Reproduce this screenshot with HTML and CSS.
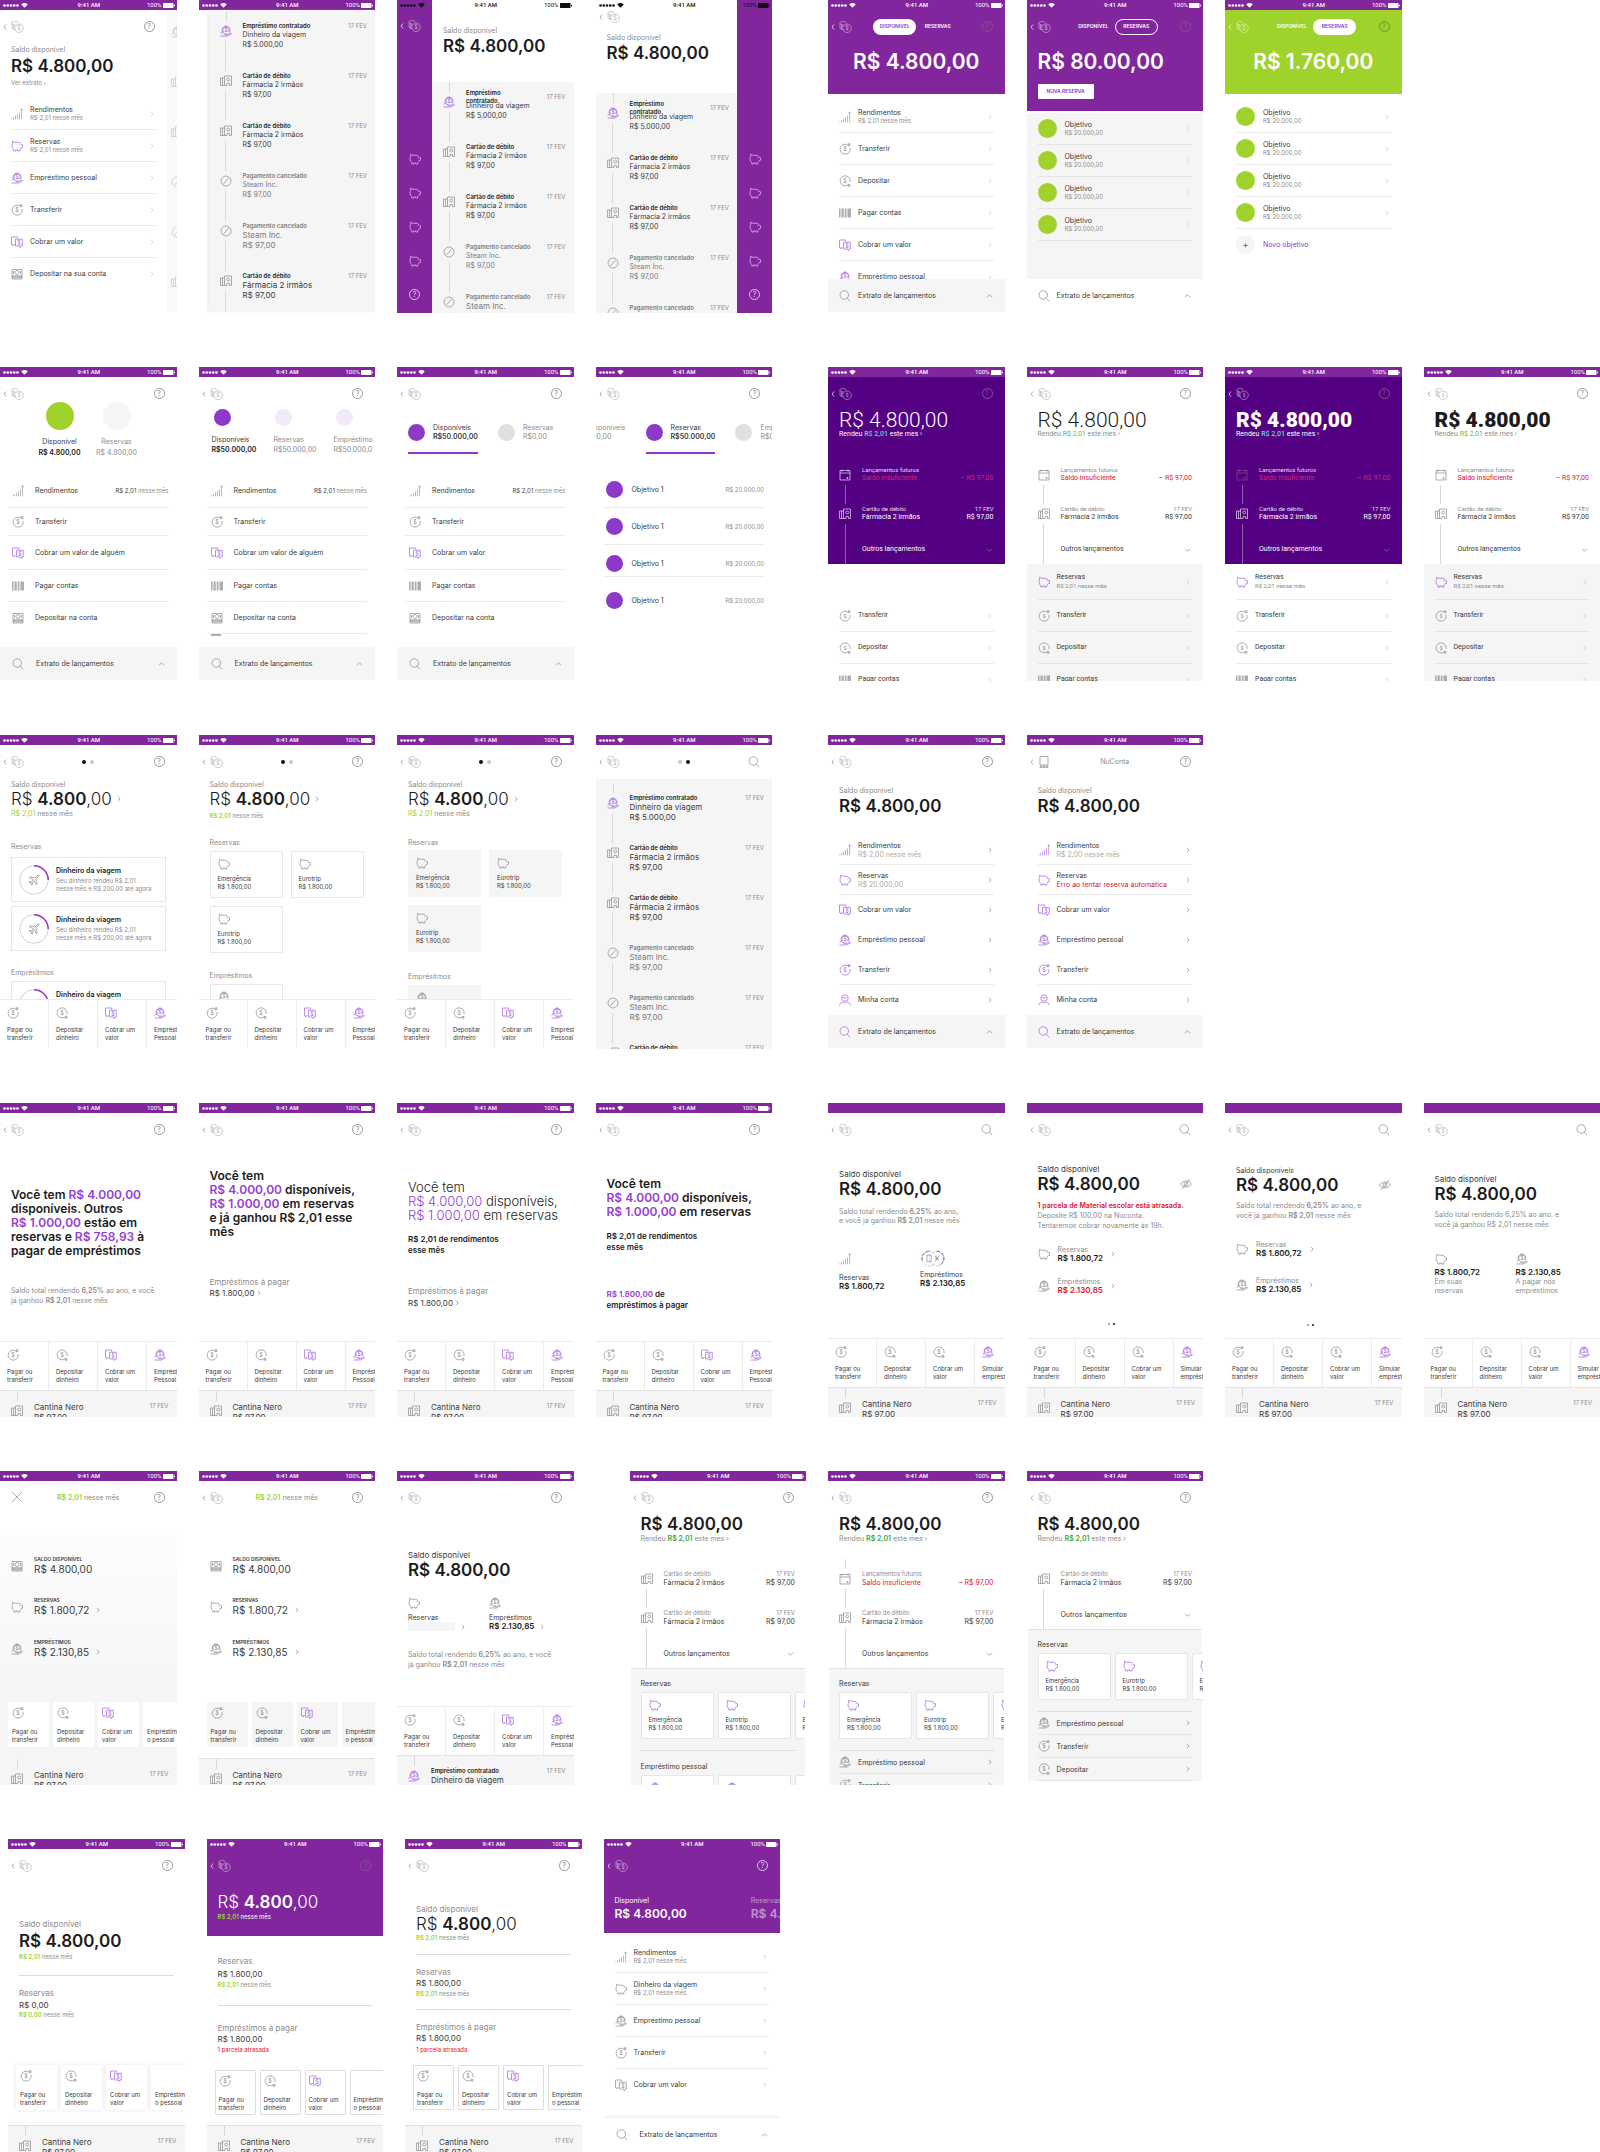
FILE: index.html
```html
<!DOCTYPE html>
<html lang="pt-BR">
<head>
<meta charset="utf-8">
<title>NuConta – estudos da tela inicial</title>
<link rel="stylesheet" href="styles.css">
</head>
<body>
<svg class="defs" aria-hidden="true">
<symbol id="sig" viewBox="0 0 50 10"><g fill="currentColor" stroke="none"><circle cx="3" cy="5" r="2.6"/><circle cx="9.500" cy="5" r="2.600"/><circle cx="16" cy="5" r="2.600"/><circle cx="22.500" cy="5" r="2.600"/><circle cx="29" cy="5" r="2.600"/><path d="M43 9.500 36.500 3a9 9 0 0 1 13 0z"/></g></symbol>
<symbol id="bat" viewBox="0 0 24 10"><rect x="0" y="0" width="21" height="10" rx="1" fill="currentColor" stroke="none"/><rect x="22" y="3.500" width="2" height="3" fill="currentColor" stroke="none"/></symbol>
<symbol id="back" viewBox="0 0 42 24"><path d="M6 7 2 12l4 5"/><g opacity=".6"><path d="M25 17c-4 0-7-1-7-3V4c0-2 2-3 5-3 4 0 7 1 7 3M18 5c1 2 4 2 6 2M21 7v9M23.500 8v3"/><circle cx="32" cy="14.500" r="8.500"/><text x="32" y="18.500" class="coin">$</text></g></symbol>
<symbol id="search" viewBox="0 0 24 24"><circle cx="10.500" cy="10" r="8.500"/><path d="m16.500 16.500 6 6"/></symbol>
<symbol id="chart" viewBox="0 0 24 24"><path stroke-width="1.2" d="M1.500 22.500v-2M5 22.500v-4M9 22.500v-7M13 22.500v-10M17 22.500V9M21.200 22.500V2M19.500 4.500 21.200 1.500 23 4.500"/></symbol>
<symbol id="pig" viewBox="0 0 24 24"><path d="M3 2.500 7.500 4.500H16c2 1 3.500 2.500 4.500 4.500l2.500.5v5l-3 1c-.5 1.500-1.500 2.500-2.500 3.500V22h-4v-2H9.500v2h-4v-3C1.500 16 1 10 3.500 6.500z"/><path d="M17.500 9v1.500"/></symbol>
<symbol id="loan" viewBox="0 0 24 24"><path d="M4.500 15c-1-8 2-13 7.500-13s8.500 5 7.500 13"/><path d="M7 14a6.500 6.500 0 1 1 10 0M1 16.500l4-1.500 6 3h4.500M1 22h14l8-4.500c-1-1.500-3-1.500-4-.5l-4 2.500H9"/><text x="12" y="13" class="coin">$</text></symbol>
<symbol id="send" viewBox="0 0 24 24"><path d="M18.500 4.500A10 10 0 1 0 22 10M18.500 1.500h3.500V5l-3 .5z"/><text x="12" y="16" class="coin">$</text></symbol>
<symbol id="put" viewBox="0 0 24 24"><path d="M18.500 19.500A10 10 0 1 1 22 14M18.500 22.500h3.500V19l-3-.5z"/><text x="12" y="16" class="coin">$</text></symbol>
<symbol id="charge" viewBox="0 0 24 24"><path d="M7 17H5.500L4 20l-1.500-3H1V2h12.500v3"/><path d="M9 6.500h13.500V20H20l-1.500 3-1.500-3H9z"/><text x="15.800" y="17" class="coin">$</text></symbol>
<symbol id="cash" viewBox="0 0 24 24"><path d="M2 3h20v19H2z"/><circle cx="12" cy="9" r="4"/><path d="M5 6v6M19 6v6M2 15.500h20M2 17.500h20M2 19.500h20"/></symbol>
<symbol id="code" viewBox="0 0 24 24"><path d="M1 3v18M4 3v18M7 3v18M9.500 3v18M13 3v18M16 3v18M19 3v18M21 3v18M23 3v18"/></symbol>
<symbol id="shop" viewBox="0 0 24 24"><path d="M9 21H1V6h8M5 6v15M9 21V2h14v19h-4v-4h-5v4z"/><circle cx="16.500" cy="9" r="3"/></symbol>
<symbol id="ban" viewBox="0 0 24 24"><circle cx="12" cy="12" r="10"/><path d="m6.500 18.500 11-13"/></symbol>
<symbol id="cal" viewBox="0 0 24 24"><path d="M2 3h20v19H2zM2 8h20M6 1v4.500M18 1v4.500M15 18h4M17 16v4"/></symbol>
<symbol id="right" viewBox="0 0 8 12"><path d="m2 1.500 4 4.500-4 4.500"/></symbol>
<symbol id="up" viewBox="0 0 14 8"><path d="m2 6.500 5-5 5 5"/></symbol>
<symbol id="down" viewBox="0 0 14 8"><path d="m2 1.500 5 5 5-5"/></symbol>
<symbol id="plane" viewBox="0 0 24 24"><path d="M20 2c1.500-.5 2.500.5 2 2l-6 6 2.500 10-2 1.500-4-8-4 4 .5 3.500L7.500 22 6 18l-4-1.500L3.500 15l3.500.5 4-4-8-4L4.500 5.500 14 8z"/></symbol>
<symbol id="ring" viewBox="0 0 60 60"><circle cx="30" cy="30" r="28.500" stroke="#bbb"/><path d="M30 1.500A28.500 28.500 0 0 1 58.500 30" stroke="#8c38c8" stroke-width="3"/><svg x="18" y="18" width="24" height="24"><use href="#plane"/></svg></symbol>
<symbol id="rings" viewBox="0 0 54 36"><g stroke-dasharray="7 3"><circle cx="19" cy="18" r="15.500" stroke="#bbb"/><circle cx="35" cy="18" r="15.500" stroke="#bbb"/><path d="M4 22A15.500 15.500 0 0 1 22 3M35 2.500A15.500 15.500 0 0 1 40 32.500" stroke="#8c38c8" stroke-width="2"/></g><path d="M14 11h9v14h-9zM31 12l9 12M40 12l-9 12M32 18h7"/></symbol>
<symbol id="hide" viewBox="0 0 24 24"><path d="M1 12c5-8 17-8 22 0-5 8-17 8-22 0z"/><circle cx="12" cy="12" r="4"/><path d="M4 22 20 2"/></symbol>
<symbol id="user" viewBox="0 0 24 24"><circle cx="12" cy="8" r="6.500"/><path d="M8 6.500c3 2 6 2 9 0M1 22.500c0-4 4-5 8-6.500 2 2 4 2 6 0 4 1.500 8 2.500 8 6.500"/></symbol>
<symbol id="close" viewBox="0 0 24 24"><path d="m2 2 20 20M22 2 2 22"/></symbol>
<symbol id="heart" viewBox="0 0 24 24"><path d="M12 21C5 16 2 12 2 8c0-5 8-6 10-1 2-5 10-4 10 1 0 4-3 8-10 13z"/></symbol>
<symbol id="card" viewBox="0 0 42 24"><path d="M6 7 2 12l4 5M20 1h16v17H20zM20 20h4v3h-4zM26 20h4v3h-4zM32 20h4v3h-4z"/></symbol>
</svg>

<main class="sheet">

<!-- 1: lista, extrato lateral e abas -->
<section class="strip first">
<article class="phone">
<header class="bar"><svg><use href="#sig"/></svg><b>9:41 AM</b><span>100%<svg><use href="#bat"/></svg></span></header>
<div class="split">
<div class="pane">
<nav class="nav"><a href="#" class="back" aria-label="Voltar"><svg><use href="#back"/></svg></a><i></i><button class="help" aria-label="Ajuda">?</button></nav>
<div class="pad"><p class="muted m2">Saldo disponível</p><h2 class="amt m2">R$ 4.800,00</h2><p class="sm muted m3">Ver extrato ›</p></div>
<div class="list m11">
<a href="#" class="row"><svg class="i"><use href="#chart"/></svg><span>Rendimentos<small>R$ 2,01 nesse mês</small></span><svg class="ch"><use href="#right"/></svg></a>
<a href="#" class="row"><svg class="i pu"><use href="#pig"/></svg><span>Reservas<small>R$ 2,01 nesse mês</small></span><svg class="ch"><use href="#right"/></svg></a>
<a href="#" class="row"><svg class="i pu"><use href="#loan"/></svg><span>Empréstimo pessoal</span><svg class="ch"><use href="#right"/></svg></a>
<a href="#" class="row"><svg class="i"><use href="#send"/></svg><span>Transferir</span><svg class="ch"><use href="#right"/></svg></a>
<a href="#" class="row"><svg class="i pu"><use href="#charge"/></svg><span>Cobrar um valor</span><svg class="ch"><use href="#right"/></svg></a>
<a href="#" class="row"><svg class="i"><use href="#cash"/></svg><span>Depositar na sua conta</span><svg class="ch"><use href="#right"/></svg></a>
</div>
</div>
<aside class="peek"><svg class="i pu"><use href="#loan"/></svg><svg class="i"><use href="#shop"/></svg><svg class="i"><use href="#shop"/></svg><svg class="i"><use href="#ban"/></svg><svg class="i"><use href="#ban"/></svg><svg class="i"><use href="#shop"/></svg></aside>
</div>
</article>

<article class="phone">
<header class="bar"><svg><use href="#sig"/></svg><b>9:41 AM</b><span>100%<svg><use href="#bat"/></svg></span></header>
<div class="panel grow slid m1">
<div class="lead"></div>
<div class="tx"><div class="rail"><svg class="i pu"><use href="#loan"/></svg></div><div class="info"><p class="sp"><b>Empréstimo contratado</b><time>17 FEV</time></p><p>Dinheiro da viagem</p><p>R$ 5.000,00</p></div></div>
<div class="tx"><div class="rail"><svg class="i"><use href="#shop"/></svg></div><div class="info"><p class="sp"><b>Cartão de débito</b><time>17 FEV</time></p><p>Fármacia 2 irmãos</p><p>R$ 97,00</p></div></div>
<div class="tx"><div class="rail"><svg class="i"><use href="#shop"/></svg></div><div class="info"><p class="sp"><b>Cartão de débito</b><time>17 FEV</time></p><p>Fármacia 2 irmãos</p><p>R$ 97,00</p></div></div>
<div class="tx off"><div class="rail"><svg class="i"><use href="#ban"/></svg></div><div class="info"><p class="sp"><b>Pagamento cancelado</b><time>17 FEV</time></p><p>Steam Inc.</p><p>R$ 97,00</p></div></div>
<div class="tx off lg"><div class="rail"><svg class="i"><use href="#ban"/></svg></div><div class="info"><p class="sp"><b>Pagamento cancelado</b><time>17 FEV</time></p><p>Steam Inc.</p><p>R$ 97,00</p></div></div>
<div class="tx lg"><div class="rail"><svg class="i"><use href="#shop"/></svg></div><div class="info"><p class="sp"><b>Cartão de débito</b><time>17 FEV</time></p><p>Fármacia 2 irmãos</p><p>R$ 97,00</p></div></div>
</div>
</article>

<article class="phone">
<header class="bar clear"><svg><use href="#sig"/></svg><b>9:41 AM</b><span>100%<svg><use href="#bat"/></svg></span></header>
<div class="split">
<aside class="side"><a href="#" class="back" aria-label="Voltar"><svg><use href="#back"/></svg></a><svg class="i"><use href="#pig"/></svg><svg class="i"><use href="#pig"/></svg><svg class="i"><use href="#pig"/></svg><svg class="i"><use href="#pig"/></svg><button class="help" aria-label="Ajuda">?</button></aside>
<div class="pane">
<div class="pad m26"><p class="muted">Saldo disponível</p><h2 class="amt m1">R$ 4.800,00</h2></div>
<div class="panel grow m26">
<div class="lead"></div>
<div class="tx"><div class="rail"><svg class="i pu"><use href="#loan"/></svg></div><div class="info two"><p class="sp"><b>Empréstimo contratado</b><time>17 FEV</time></p><p>Dinheiro da viagem</p><p>R$ 5.000,00</p></div></div>
<div class="tx"><div class="rail"><svg class="i"><use href="#shop"/></svg></div><div class="info"><p class="sp"><b>Cartão de débito</b><time>17 FEV</time></p><p>Fármacia 2 irmãos</p><p>R$ 97,00</p></div></div>
<div class="tx"><div class="rail"><svg class="i"><use href="#shop"/></svg></div><div class="info"><p class="sp"><b>Cartão de débito</b><time>17 FEV</time></p><p>Fármacia 2 irmãos</p><p>R$ 97,00</p></div></div>
<div class="tx off"><div class="rail"><svg class="i"><use href="#ban"/></svg></div><div class="info"><p class="sp"><b>Pagamento cancelado</b><time>17 FEV</time></p><p>Steam Inc.</p><p>R$ 97,00</p></div></div>
<div class="tx off lg"><div class="rail"><svg class="i"><use href="#ban"/></svg></div><div class="info"><p class="sp"><b>Pagamento cancelado</b><time>17 FEV</time></p><p>Steam Inc.</p></div></div>
</div>
</div>
</div>
</article>

<article class="phone">
<header class="bar clear"><svg><use href="#sig"/></svg><b>9:41 AM</b><span>100%<svg><use href="#bat"/></svg></span></header>
<div class="split">
<div class="pane">
<nav class="nav"><a href="#" class="back" aria-label="Voltar"><svg><use href="#back"/></svg></a></nav>
<div class="pad"><p class="muted">Saldo disponível</p><h2 class="amt m1">R$ 4.800,00</h2></div>
<div class="panel grow m30">
<div class="lead"></div>
<div class="tx"><div class="rail"><svg class="i pu"><use href="#loan"/></svg></div><div class="info two"><p class="sp"><b>Empréstimo contratado</b><time>17 FEV</time></p><p>Dinheiro da viagem</p><p>R$ 5.000,00</p></div></div>
<div class="tx"><div class="rail"><svg class="i"><use href="#shop"/></svg></div><div class="info"><p class="sp"><b>Cartão de débito</b><time>17 FEV</time></p><p>Fármacia 2 irmãos</p><p>R$ 97,00</p></div></div>
<div class="tx"><div class="rail"><svg class="i"><use href="#shop"/></svg></div><div class="info"><p class="sp"><b>Cartão de débito</b><time>17 FEV</time></p><p>Fármacia 2 irmãos</p><p>R$ 97,00</p></div></div>
<div class="tx off"><div class="rail"><svg class="i"><use href="#ban"/></svg></div><div class="info"><p class="sp"><b>Pagamento cancelado</b><time>17 FEV</time></p><p>Steam Inc.</p><p>R$ 97,00</p></div></div>
<div class="tx off"><div class="rail"><svg class="i"><use href="#ban"/></svg></div><div class="info"><p class="sp"><b>Pagamento cancelado</b><time>17 FEV</time></p></div></div>
</div>
</div>
<aside class="side"><i class="gap"></i><svg class="i"><use href="#pig"/></svg><svg class="i"><use href="#pig"/></svg><svg class="i"><use href="#pig"/></svg><svg class="i"><use href="#pig"/></svg><button class="help" aria-label="Ajuda">?</button></aside>
</div>
</article>

<article class="phone apart">
<header class="bar"><svg><use href="#sig"/></svg><b>9:41 AM</b><span>100%<svg><use href="#bat"/></svg></span></header>
<div class="head">
<nav class="nav"><a href="#" class="back" aria-label="Voltar"><svg><use href="#back"/></svg></a><div class="tabs"><button class="on">DISPONÍVEL</button><button>RESERVAS</button></div><button class="help dim" aria-label="Ajuda">?</button></nav>
<h2 class="hero mid m9">R$ 4.800,00</h2>
</div>
<div class="body">
<div class="list m7">
<a href="#" class="row"><svg class="i"><use href="#chart"/></svg><span>Rendimentos<small>R$ 2,01 nesse mês</small></span><svg class="ch"><use href="#right"/></svg></a>
<a href="#" class="row"><svg class="i"><use href="#send"/></svg><span>Transferir</span><svg class="ch"><use href="#right"/></svg></a>
<a href="#" class="row"><svg class="i"><use href="#put"/></svg><span>Depositar</span><svg class="ch"><use href="#right"/></svg></a>
<a href="#" class="row"><svg class="i"><use href="#code"/></svg><span>Pagar contas</span><svg class="ch"><use href="#right"/></svg></a>
<a href="#" class="row"><svg class="i pu"><use href="#charge"/></svg><span>Cobrar um valor</span><svg class="ch"><use href="#right"/></svg></a>
<a href="#" class="row"><svg class="i pu"><use href="#loan"/></svg><span>Empréstimo pessoal</span><svg class="ch"><use href="#right"/></svg></a>
</div>
</div>
<a href="#" class="foot"><svg class="i"><use href="#search"/></svg><span>Extrato de lançamentos</span><svg class="cv"><use href="#up"/></svg></a>
</article>

<article class="phone">
<header class="bar"><svg><use href="#sig"/></svg><b>9:41 AM</b><span>100%<svg><use href="#bat"/></svg></span></header>
<div class="head short">
<nav class="nav"><a href="#" class="back" aria-label="Voltar"><svg><use href="#back"/></svg></a><div class="tabs"><button>DISPONÍVEL</button><button class="line">RESERVAS</button></div><button class="help dim" aria-label="Ajuda">?</button></nav>
<div class="pad"><h2 class="hero m9">R$ 80.00,00</h2><button class="new m12">NOVA RESERVA</button></div>
</div>
<div class="body panel m2">
<div class="list">
<a href="#" class="row"><i class="ball green"></i><span>Objetivo<small>R$ 20.000,00</small></span><svg class="ch"><use href="#right"/></svg></a>
<a href="#" class="row"><i class="ball green"></i><span>Objetivo<small>R$ 20.000,00</small></span><svg class="ch"><use href="#right"/></svg></a>
<a href="#" class="row"><i class="ball green"></i><span>Objetivo<small>R$ 20.000,00</small></span><svg class="ch"><use href="#right"/></svg></a>
<a href="#" class="row ruled"><i class="ball green"></i><span>Objetivo<small>R$ 20.000,00</small></span><svg class="ch"><use href="#right"/></svg></a>
</div>
</div>
<a href="#" class="foot white"><svg class="i"><use href="#search"/></svg><span>Extrato de lançamentos</span><svg class="cv"><use href="#up"/></svg></a>
</article>

<article class="phone">
<header class="bar"><svg><use href="#sig"/></svg><b>9:41 AM</b><span>100%<svg><use href="#bat"/></svg></span></header>
<div class="head lime">
<nav class="nav"><a href="#" class="back" aria-label="Voltar"><svg><use href="#back"/></svg></a><div class="tabs"><button>DISPONÍVEL</button><button class="on">RESERVAS</button></div><button class="help dark" aria-label="Ajuda">?</button></nav>
<h2 class="hero mid m9">R$ 1.760,00</h2>
</div>
<div class="list m7">
<a href="#" class="row"><i class="ball green"></i><span>Objetivo<small>R$ 20.000,00</small></span><svg class="ch"><use href="#right"/></svg></a>
<a href="#" class="row"><i class="ball green"></i><span>Objetivo<small>R$ 20.000,00</small></span><svg class="ch"><use href="#right"/></svg></a>
<a href="#" class="row"><i class="ball green"></i><span>Objetivo<small>R$ 20.000,00</small></span><svg class="ch"><use href="#right"/></svg></a>
<a href="#" class="row"><i class="ball green"></i><span>Objetivo<small>R$ 20.000,00</small></span><svg class="ch"><use href="#right"/></svg></a>
<a href="#" class="row pt"><i class="ball grey">+</i><span>Novo objetivo</span></a>
</div>
</article>
</section>

<!-- 2: contas em bolinhas e linha do tempo -->
<section class="strip">
<article class="phone">
<header class="bar"><svg><use href="#sig"/></svg><b>9:41 AM</b><span>100%<svg><use href="#bat"/></svg></span></header>
<nav class="nav"><a href="#" class="back" aria-label="Voltar"><svg><use href="#back"/></svg></a><i></i><button class="help" aria-label="Ajuda">?</button></nav>
<div class="body over">
<div class="bubbles big"><div><i class="ball green"></i><p class="m7">Disponível</p><p class="m2 bold">R$ 4.800,00</p></div><div class="muted"><i class="ball grey"></i><p class="m7">Reservas</p><p class="m2">R$ 4.800,00</p></div></div>
<div class="list wide m17">
<a href="#" class="row h34"><svg class="i"><use href="#chart"/></svg><span>Rendimentos</span><span class="end">R$ 2,01 <em>nesse mês</em></span></a>
<a href="#" class="row h28"><svg class="i"><use href="#send"/></svg><span>Transferir</span></a>
<a href="#" class="row h34"><svg class="i pu"><use href="#charge"/></svg><span>Cobrar um valor de alguém</span></a>
<a href="#" class="row"><svg class="i"><use href="#code"/></svg><span>Pagar contas</span></a>
<a href="#" class="row"><svg class="i"><use href="#cash"/></svg><span>Depositar na conta</span></a>
</div>
</div>
<a href="#" class="foot far"><svg class="i"><use href="#search"/></svg><span>Extrato de lançamentos</span><svg class="cv"><use href="#up"/></svg></a>
</article>

<article class="phone">
<header class="bar"><svg><use href="#sig"/></svg><b>9:41 AM</b><span>100%<svg><use href="#bat"/></svg></span></header>
<nav class="nav"><a href="#" class="back" aria-label="Voltar"><svg><use href="#back"/></svg></a><i></i><button class="help" aria-label="Ajuda">?</button></nav>
<div class="body over">
<div class="bubbles"><div><i class="ball"></i><p class="m9">Disponíveis</p><p class="m1 bold">R$50.000,00</p></div><div class="muted"><i class="ball pale"></i><p class="m9">Reservas</p><p class="m1">R$50.000,00</p></div><div class="muted"><i class="ball pale"></i><p class="m9">Empréstimo</p><p class="m1">R$50.000,0</p></div></div>
<div class="list wide m20">
<a href="#" class="row h34"><svg class="i"><use href="#chart"/></svg><span>Rendimentos</span><span class="end">R$ 2,01 <em>nesse mês</em></span></a>
<a href="#" class="row h28"><svg class="i"><use href="#send"/></svg><span>Transferir</span></a>
<a href="#" class="row h34"><svg class="i pu"><use href="#charge"/></svg><span>Cobrar um valor de alguém</span></a>
<a href="#" class="row"><svg class="i"><use href="#code"/></svg><span>Pagar contas</span></a>
<a href="#" class="row"><svg class="i"><use href="#cash"/></svg><span>Depositar na conta</span></a>
<i class="dash"></i>
</div>
</div>
<a href="#" class="foot far"><svg class="i"><use href="#search"/></svg><span>Extrato de lançamentos</span><svg class="cv"><use href="#up"/></svg></a>
</article>

<article class="phone">
<header class="bar"><svg><use href="#sig"/></svg><b>9:41 AM</b><span>100%<svg><use href="#bat"/></svg></span></header>
<nav class="nav"><a href="#" class="back" aria-label="Voltar"><svg><use href="#back"/></svg></a><i></i><button class="help" aria-label="Ajuda">?</button></nav>
<div class="body">
<div class="accts"><div class="on"><i class="ball"></i><p>Disponíveis<br><b>R$50.000,00</b></p></div><div class="muted"><i class="ball grey"></i><p>Reservas<br>R$0,00</p></div></div>
<div class="list wide m20">
<a href="#" class="row h34"><svg class="i"><use href="#chart"/></svg><span>Rendimentos</span><span class="end">R$ 2,01 <em>nesse mês</em></span></a>
<a href="#" class="row h28"><svg class="i"><use href="#send"/></svg><span>Transferir</span></a>
<a href="#" class="row h34"><svg class="i pu"><use href="#charge"/></svg><span>Cobrar um valor</span></a>
<a href="#" class="row"><svg class="i"><use href="#code"/></svg><span>Pagar contas</span></a>
<a href="#" class="row"><svg class="i"><use href="#cash"/></svg><span>Depositar na conta</span></a>
</div>
</div>
<a href="#" class="foot far"><svg class="i"><use href="#search"/></svg><span>Extrato de lançamentos</span><svg class="cv"><use href="#up"/></svg></a>
</article>

<article class="phone">
<header class="bar"><svg><use href="#sig"/></svg><b>9:41 AM</b><span>100%<svg><use href="#bat"/></svg></span></header>
<nav class="nav"><a href="#" class="back" aria-label="Voltar"><svg><use href="#back"/></svg></a><i></i><button class="help" aria-label="Ajuda">?</button></nav>
<div class="body">
<div class="accts scrolled"><div class="muted"><i class="ball grey"></i><p>Disponíveis<br>R$0,00</p></div><div class="on"><i class="ball"></i><p>Reservas<br><b>R$50.000,00</b></p></div><div class="muted"><i class="ball grey"></i><p>Empréstimos<br>R$0,00</p></div></div>
<div class="list wide goals m17">
<a href="#" class="row"><i class="ball"></i><span>Objetivo 1</span><span class="end muted">R$ 20.000,00</span></a>
<a href="#" class="row"><i class="ball"></i><span>Objetivo 1</span><span class="end muted">R$ 20.000,00</span></a>
<a href="#" class="row"><i class="ball"></i><span>Objetivo 1</span><span class="end muted">R$ 20.000,00</span></a>
<a href="#" class="row"><i class="ball"></i><span>Objetivo 1</span><span class="end muted">R$ 20.000,00</span></a>
</div>
</div>
</article>

<article class="phone apart sys">
<header class="bar"><svg><use href="#sig"/></svg><b>9:41 AM</b><span>100%<svg><use href="#bat"/></svg></span></header>
<div class="night">
<nav class="nav"><a href="#" class="back" aria-label="Voltar"><svg><use href="#back"/></svg></a><i></i><button class="help dim" aria-label="Ajuda">?</button></nav>
<div class="pad"><h2 class="hero thin">R$ 4.800,00</h2><p>Rendeu <b class="gain">R$ 2,01</b> este mes ›</p></div>
<div class="tx brief m30"><div class="rail"><svg class="i"><use href="#cal"/></svg></div><div class="info"><p class="sp"><span>Lançamentos futuros</span></p><p class="sp red"><span>Saldo insuficiente</span><span>– R$ 97,00</span></p></div></div>
<div class="tx brief last"><div class="rail"><svg class="i"><use href="#shop"/></svg></div><div class="info"><p class="sp"><span>Cartão de débito</span><time>17 FEV</time></p><p class="sp"><span>Fármacia 2 irmãos</span><span>R$ 97,00</span></p><a href="#" class="sp more"><span>Outros lançamentos</span><svg class="cv"><use href="#down"/></svg></a></div></div>
</div>
<div class="list m36">
<a href="#" class="row"><svg class="i"><use href="#send"/></svg><span>Transferir</span><svg class="ch"><use href="#right"/></svg></a>
<a href="#" class="row"><svg class="i"><use href="#put"/></svg><span>Depositar</span><svg class="ch"><use href="#right"/></svg></a>
<a href="#" class="row"><svg class="i"><use href="#code"/></svg><span>Pagar contas</span><svg class="ch"><use href="#right"/></svg></a>
</div>
</article>

<article class="phone sys">
<header class="bar"><svg><use href="#sig"/></svg><b>9:41 AM</b><span>100%<svg><use href="#bat"/></svg></span></header>
<nav class="nav"><a href="#" class="back" aria-label="Voltar"><svg><use href="#back"/></svg></a><i></i><button class="help" aria-label="Ajuda">?</button></nav>
<div class="pad"><h2 class="hero thin">R$ 4.800,00</h2><p class="muted">Rendeu <span class="gain">R$ 2,01</span> este mes ›</p></div>
<div class="tx brief m30"><div class="rail"><svg class="i"><use href="#cal"/></svg></div><div class="info"><p class="sp"><span>Lançamentos futuros</span></p><p class="sp red"><span>Saldo insuficiente</span><span>– R$ 97,00</span></p></div></div>
<div class="tx brief last"><div class="rail"><svg class="i"><use href="#shop"/></svg></div><div class="info"><p class="sp"><span>Cartão de débito</span><time>17 FEV</time></p><p class="sp"><span>Fármacia 2 irmãos</span><span>R$ 97,00</span></p><a href="#" class="sp more"><span>Outros lançamentos</span><svg class="cv"><use href="#down"/></svg></a></div></div>
<div class="panel grow">
<div class="list">
<a href="#" class="row h36"><svg class="i pu"><use href="#pig"/></svg><span>Reservas<small>R$ 2,01 nesse mês</small></span><svg class="ch"><use href="#right"/></svg></a>
<a href="#" class="row"><svg class="i"><use href="#send"/></svg><span>Transferir</span><svg class="ch"><use href="#right"/></svg></a>
<a href="#" class="row"><svg class="i"><use href="#put"/></svg><span>Depositar</span><svg class="ch"><use href="#right"/></svg></a>
<a href="#" class="row"><svg class="i"><use href="#code"/></svg><span>Pagar contas</span><svg class="ch"><use href="#right"/></svg></a>
</div>
</div>
</article>

<article class="phone sys">
<header class="bar"><svg><use href="#sig"/></svg><b>9:41 AM</b><span>100%<svg><use href="#bat"/></svg></span></header>
<div class="night">
<nav class="nav"><a href="#" class="back" aria-label="Voltar"><svg><use href="#back"/></svg></a><i></i><button class="help dim" aria-label="Ajuda">?</button></nav>
<div class="pad"><h2 class="hero fat">R$ 4.800,00</h2><p>Rendeu <b class="gain">R$ 2,01</b> este mes ›</p></div>
<div class="tx brief m30"><div class="rail"><svg class="i faint"><use href="#cal"/></svg></div><div class="info"><p class="sp"><span>Lançamentos futuros</span></p><p class="sp red"><span>Saldo insuficiente</span><span>– R$ 97,00</span></p></div></div>
<div class="tx brief last"><div class="rail"><svg class="i"><use href="#shop"/></svg></div><div class="info"><p class="sp"><span>Cartão de débito</span><time>17 FEV</time></p><p class="sp"><span>Fármacia 2 irmãos</span><span>R$ 97,00</span></p><a href="#" class="sp more"><span>Outros lançamentos</span><svg class="cv"><use href="#down"/></svg></a></div></div>
</div>
<div class="list">
<a href="#" class="row h36"><svg class="i pu"><use href="#pig"/></svg><span>Reservas<small>R$ 2,01 nesse mês</small></span><svg class="ch"><use href="#right"/></svg></a>
<a href="#" class="row"><svg class="i"><use href="#send"/></svg><span>Transferir</span><svg class="ch"><use href="#right"/></svg></a>
<a href="#" class="row"><svg class="i"><use href="#put"/></svg><span>Depositar</span><svg class="ch"><use href="#right"/></svg></a>
<a href="#" class="row"><svg class="i"><use href="#code"/></svg><span>Pagar contas</span><svg class="ch"><use href="#right"/></svg></a>
</div>
</article>

<article class="phone sys">
<header class="bar"><svg><use href="#sig"/></svg><b>9:41 AM</b><span>100%<svg><use href="#bat"/></svg></span></header>
<nav class="nav"><a href="#" class="back" aria-label="Voltar"><svg><use href="#back"/></svg></a><i></i><button class="help" aria-label="Ajuda">?</button></nav>
<div class="pad"><h2 class="hero fat">R$ 4.800,00</h2><p class="muted">Rendeu <span class="gain">R$ 2,01</span> este mes ›</p></div>
<div class="tx brief m30"><div class="rail"><svg class="i"><use href="#cal"/></svg></div><div class="info"><p class="sp"><span>Lançamentos futuros</span></p><p class="sp red"><span>Saldo insuficiente</span><span>– R$ 97,00</span></p></div></div>
<div class="tx brief last"><div class="rail"><svg class="i"><use href="#shop"/></svg></div><div class="info"><p class="sp"><span>Cartão de débito</span><time>17 FEV</time></p><p class="sp"><span>Fármacia 2 irmãos</span><span>R$ 97,00</span></p><a href="#" class="sp more"><span>Outros lançamentos</span><svg class="cv"><use href="#down"/></svg></a></div></div>
<div class="panel grow">
<div class="list">
<a href="#" class="row h36"><svg class="i pu"><use href="#pig"/></svg><span>Reservas<small>R$ 2,01 nesse mês</small></span><svg class="ch"><use href="#right"/></svg></a>
<a href="#" class="row"><svg class="i"><use href="#send"/></svg><span>Transferir</span><svg class="ch"><use href="#right"/></svg></a>
<a href="#" class="row"><svg class="i"><use href="#put"/></svg><span>Depositar</span><svg class="ch"><use href="#right"/></svg></a>
<a href="#" class="row"><svg class="i"><use href="#code"/></svg><span>Pagar contas</span><svg class="ch"><use href="#right"/></svg></a>
</div>
</div>
</article>
</section>

<!-- 3: cartões de reserva -->
<section class="strip">
<article class="phone">
<header class="bar"><svg><use href="#sig"/></svg><b>9:41 AM</b><span>100%<svg><use href="#bat"/></svg></span></header>
<nav class="nav"><a href="#" class="back" aria-label="Voltar"><svg><use href="#back"/></svg></a><div class="dots"><i class="on"></i><i></i></div><button class="help" aria-label="Ajuda">?</button></nav>
<div class="body pad">
<p class="muted m2">Saldo disponível</p><h2 class="amt mix">R$ <b>4.800</b>,00 <svg class="ch"><use href="#right"/></svg></h2><p class="muted"><span class="lime-t">R$ 2,01</span> nesse mês</p>
<p class="muted m24">Reservas</p>
<div class="trip m6"><svg class="ring"><use href="#ring"/></svg><div><b>Dinheiro da viagem</b><p class="sm muted m2">Seu dinheiro rendeu R$ 2,01<br>nesse mês e R$ 200,00 até agora</p></div></div>
<div class="trip m4"><svg class="ring"><use href="#ring"/></svg><div><b>Dinheiro da viagem</b><p class="sm muted m2">Seu dinheiro rendeu R$ 2,01<br>nesse mês e R$ 200,00 até agora</p></div></div>
<p class="muted m17">Emprésitmos</p>
<div class="trip m4"><svg class="ring"><use href="#ring"/></svg><div><b>Dinheiro da viagem</b><p class="sm muted m2">Seu dinheiro rendeu R$ 2,01<br>nesse mês e R$ 200,00 até agora</p></div></div>
</div>
<div class="acts end1"><a href="#"><svg class="i"><use href="#send"/></svg>Pagar ou<br>transferir</a><a href="#"><svg class="i"><use href="#put"/></svg>Depositar<br>dinheiro</a><a href="#"><svg class="i pu"><use href="#charge"/></svg>Cobrar um<br>valor</a><a href="#"><svg class="i pu"><use href="#loan"/></svg>Emprést<br>Pessoal</a></div>
</article>

<article class="phone">
<header class="bar"><svg><use href="#sig"/></svg><b>9:41 AM</b><span>100%<svg><use href="#bat"/></svg></span></header>
<nav class="nav"><a href="#" class="back" aria-label="Voltar"><svg><use href="#back"/></svg></a><div class="dots"><i class="on"></i><i></i></div><button class="help" aria-label="Ajuda">?</button></nav>
<div class="body pad">
<p class="muted m2">Saldo disponível</p><h2 class="amt mix">R$ <b>4.800</b>,00 <svg class="ch"><use href="#right"/></svg></h2><p class="muted sm m3"><b class="lime-t">R$ 2,01</b> nesse mês</p>
<p class="muted m18">Reservas</p>
<div class="cards m4"><div class="card"><svg class="i"><use href="#pig"/></svg>Emergência<br>R$ 1.800,00</div><div class="card"><svg class="i"><use href="#pig"/></svg>Eurotrip<br>R$ 1.800,00</div><div class="card"><svg class="i"><use href="#pig"/></svg>Eurotrip<br>R$ 1.800,00</div></div>
<p class="muted m18">Emprésitmos</p>
<div class="cards m4"><div class="card"><svg class="i"><use href="#loan"/></svg></div></div>
</div>
<div class="acts end1"><a href="#"><svg class="i"><use href="#send"/></svg>Pagar ou<br>transferir</a><a href="#"><svg class="i"><use href="#put"/></svg>Depositar<br>dinheiro</a><a href="#"><svg class="i pu"><use href="#charge"/></svg>Cobrar um<br>valor</a><a href="#"><svg class="i pu"><use href="#loan"/></svg>Emprést<br>Pessoal</a></div>
</article>

<article class="phone">
<header class="bar"><svg><use href="#sig"/></svg><b>9:41 AM</b><span>100%<svg><use href="#bat"/></svg></span></header>
<nav class="nav"><a href="#" class="back" aria-label="Voltar"><svg><use href="#back"/></svg></a><div class="dots"><i class="on"></i><i></i></div><button class="help" aria-label="Ajuda">?</button></nav>
<div class="body pad">
<p class="muted m2">Saldo disponível</p><h2 class="amt mix">R$ <b>4.800</b>,00 <svg class="ch"><use href="#right"/></svg></h2><p class="muted"><span class="lime-t">R$ 2,01</span> nesse mês</p>
<p class="muted m20">Reservas</p>
<div class="cards fill m3"><div class="card"><svg class="i"><use href="#pig"/></svg>Emergência<br>R$ 1.800,00</div><div class="card"><svg class="i"><use href="#pig"/></svg>Eurotrip<br>R$ 1.800,00</div><div class="card"><svg class="i"><use href="#pig"/></svg>Eurotrip<br>R$ 1.800,00</div></div>
<p class="muted m20">Emprésitmos</p>
<div class="cards fill m4"><div class="card"><svg class="i"><use href="#loan"/></svg></div></div>
</div>
<div class="acts end1"><a href="#"><svg class="i"><use href="#send"/></svg>Pagar ou<br>transferir</a><a href="#"><svg class="i"><use href="#put"/></svg>Depositar<br>dinheiro</a><a href="#"><svg class="i pu"><use href="#charge"/></svg>Cobrar um<br>valor</a><a href="#"><svg class="i pu"><use href="#loan"/></svg>Emprést<br>Pessoal</a></div>
</article>

<article class="phone">
<header class="bar"><svg><use href="#sig"/></svg><b>9:41 AM</b><span>100%<svg><use href="#bat"/></svg></span></header>
<nav class="nav"><a href="#" class="back" aria-label="Voltar"><svg><use href="#back"/></svg></a><div class="dots"><i></i><i class="on"></i></div><svg class="i find"><use href="#search"/></svg></nav>
<div class="panel grow drop m1">
<div class="lead"></div>
<div class="tx lg"><div class="rail"><svg class="i pu"><use href="#loan"/></svg></div><div class="info"><p class="sp"><b>Empréstimo contratado</b><time>17 FEV</time></p><p>Dinheiro da viagem</p><p>R$ 5.000,00</p></div></div>
<div class="tx lg"><div class="rail"><svg class="i"><use href="#shop"/></svg></div><div class="info"><p class="sp"><b>Cartão de débito</b><time>17 FEV</time></p><p>Fármacia 2 irmãos</p><p>R$ 97,00</p></div></div>
<div class="tx lg"><div class="rail"><svg class="i"><use href="#shop"/></svg></div><div class="info"><p class="sp"><b>Cartão de débito</b><time>17 FEV</time></p><p>Fármacia 2 irmãos</p><p>R$ 97,00</p></div></div>
<div class="tx lg off"><div class="rail"><svg class="i"><use href="#ban"/></svg></div><div class="info"><p class="sp"><b>Pagamento cancelado</b><time>17 FEV</time></p><p>Steam Inc.</p><p>R$ 97,00</p></div></div>
<div class="tx lg off"><div class="rail"><svg class="i"><use href="#ban"/></svg></div><div class="info"><p class="sp"><b>Pagamento cancelado</b><time>17 FEV</time></p><p>Steam Inc.</p><p>R$ 97,00</p></div></div>
<div class="tx lg"><div class="rail"><svg class="i"><use href="#shop"/></svg></div><div class="info"><p class="sp"><b>Cartão de débito</b><time>17 FEV</time></p></div></div>
</div>
</article>

<article class="phone apart">
<header class="bar"><svg><use href="#sig"/></svg><b>9:41 AM</b><span>100%<svg><use href="#bat"/></svg></span></header>
<nav class="nav"><a href="#" class="back" aria-label="Voltar"><svg><use href="#back"/></svg></a><i></i><button class="help" aria-label="Ajuda">?</button></nav>
<div class="body">
<div class="pad"><p class="muted m8">Saldo disponível</p><h2 class="amt m1">R$ 4.800,00</h2></div>
<div class="list tight m19">
<a href="#" class="row"><svg class="i pu"><use href="#chart"/></svg><span>Rendimentos<small>R$ 2,00 nesse mês</small></span><svg class="ch"><use href="#right"/></svg></a>
<a href="#" class="row"><svg class="i pu"><use href="#pig"/></svg><span>Reservas<small>R$ 20.000,00</small></span><svg class="ch"><use href="#right"/></svg></a>
<a href="#" class="row bare"><svg class="i pu"><use href="#charge"/></svg><span>Cobrar um valor</span><svg class="ch"><use href="#right"/></svg></a>
<a href="#" class="row bare"><svg class="i pu"><use href="#loan"/></svg><span>Empréstimo pessoal</span><svg class="ch"><use href="#right"/></svg></a>
<a href="#" class="row"><svg class="i pu"><use href="#send"/></svg><span>Transferir</span><svg class="ch"><use href="#right"/></svg></a>
<a href="#" class="row"><svg class="i pu"><use href="#user"/></svg><span>Minha conta</span><svg class="ch"><use href="#right"/></svg></a>
</div>
</div>
<a href="#" class="foot"><svg class="i pu"><use href="#search"/></svg><span>Extrato de lançamentos</span><svg class="cv"><use href="#up"/></svg></a>
</article>

<article class="phone">
<header class="bar"><svg><use href="#sig"/></svg><b>9:41 AM</b><span>100%<svg><use href="#bat"/></svg></span></header>
<nav class="nav"><a href="#" class="back" aria-label="Voltar"><svg><use href="#card"/></svg></a><span class="muted">NuConta</span><button class="help" aria-label="Ajuda">?</button></nav>
<div class="body">
<div class="pad"><p class="muted m8">Saldo disponível</p><h2 class="amt m1">R$ 4.800,00</h2></div>
<div class="list tight m19">
<a href="#" class="row"><svg class="i pu"><use href="#chart"/></svg><span>Rendimentos<small>R$ 2,00 nesse mês</small></span><svg class="ch"><use href="#right"/></svg></a>
<a href="#" class="row"><svg class="i pu"><use href="#pig"/></svg><span>Reservas<small class="red">Erro ao tentar reserva automática</small></span><svg class="ch"><use href="#right"/></svg></a>
<a href="#" class="row bare"><svg class="i pu"><use href="#charge"/></svg><span>Cobrar um valor</span><svg class="ch"><use href="#right"/></svg></a>
<a href="#" class="row bare"><svg class="i pu"><use href="#loan"/></svg><span>Empréstimo pessoal</span><svg class="ch"><use href="#right"/></svg></a>
<a href="#" class="row"><svg class="i pu"><use href="#send"/></svg><span>Transferir</span><svg class="ch"><use href="#right"/></svg></a>
<a href="#" class="row"><svg class="i pu"><use href="#user"/></svg><span>Minha conta</span><svg class="ch"><use href="#right"/></svg></a>
</div>
</div>
<a href="#" class="foot"><svg class="i pu"><use href="#search"/></svg><span>Extrato de lançamentos</span><svg class="cv"><use href="#up"/></svg></a>
</article>
</section>

<!-- 4: saldo em frase -->
<section class="strip">
<article class="phone">
<header class="bar"><svg><use href="#sig"/></svg><b>9:41 AM</b><span>100%<svg><use href="#bat"/></svg></span></header>
<nav class="nav"><a href="#" class="back" aria-label="Voltar"><svg><use href="#back"/></svg></a><i></i><button class="help" aria-label="Ajuda">?</button></nav>
<div class="body pad">
<h2 class="say m42">Você tem <em>R$ 4.000,00</em><br>disponíveis. Outros<br><em>R$ 1.000,00</em> estão em<br>reservas e <em>R$ 758,93</em> à<br>pagar de empréstimos</h2>
<p class="note m28">Saldo total rendendo <b>6,25%</b> ao ano, e você<br>já ganhou <b>R$ 2,01</b> nesse mês</p>
</div>
<div class="acts"><a href="#"><svg class="i"><use href="#send"/></svg>Pagar ou<br>transferir</a><a href="#"><svg class="i"><use href="#put"/></svg>Depositar<br>dinheiro</a><a href="#"><svg class="i pu"><use href="#charge"/></svg>Cobrar um<br>valor</a><a href="#"><svg class="i pu"><use href="#loan"/></svg>Emprést<br>Pessoal</a></div>
<div class="panel base"><div class="lead"></div><div class="tx lg"><div class="rail"><svg class="i"><use href="#shop"/></svg></div><div class="info"><p class="sp"><span>Cantina Nero</span><time>17 FEV</time></p><p>R$ 97,00</p></div></div></div>
</article>

<article class="phone">
<header class="bar"><svg><use href="#sig"/></svg><b>9:41 AM</b><span>100%<svg><use href="#bat"/></svg></span></header>
<nav class="nav"><a href="#" class="back" aria-label="Voltar"><svg><use href="#back"/></svg></a><i></i><button class="help" aria-label="Ajuda">?</button></nav>
<div class="body pad">
<h2 class="say m23">Você tem<br><em>R$ 4.000,00</em> disponíveis,<br><em>R$ 1.000,00</em> em reservas<br>e já ganhou R$ 2,01 esse<br>mês</h2>
<p class="lg muted m38">Empréstimos à pagar</p><p class="lg m1">R$ 1.800,00 <svg class="ch"><use href="#right"/></svg></p>
</div>
<div class="acts"><a href="#"><svg class="i"><use href="#send"/></svg>Pagar ou<br>transferir</a><a href="#"><svg class="i"><use href="#put"/></svg>Depositar<br>dinheiro</a><a href="#"><svg class="i pu"><use href="#charge"/></svg>Cobrar um<br>valor</a><a href="#"><svg class="i pu"><use href="#loan"/></svg>Emprést<br>Pessoal</a></div>
<div class="panel base"><div class="lead"></div><div class="tx lg"><div class="rail"><svg class="i"><use href="#shop"/></svg></div><div class="info"><p class="sp"><span>Cantina Nero</span><time>17 FEV</time></p><p>R$ 97,00</p></div></div></div>
</article>

<article class="phone">
<header class="bar"><svg><use href="#sig"/></svg><b>9:41 AM</b><span>100%<svg><use href="#bat"/></svg></span></header>
<nav class="nav"><a href="#" class="back" aria-label="Voltar"><svg><use href="#back"/></svg></a><i></i><button class="help" aria-label="Ajuda">?</button></nav>
<div class="body pad">
<h2 class="say soft m34">Você tem<br><em>R$ 4.000,00</em> disponíveis,<br><em>R$ 1.000,00</em> em reservas</h2>
<p class="sub m12">R$ 2,01 de rendimentos<br>esse mês</p>
<p class="lg muted m30">Empréstimos à pagar</p><p class="lg m2">R$ 1.800,00 <svg class="ch"><use href="#right"/></svg></p>
</div>
<div class="acts"><a href="#"><svg class="i"><use href="#send"/></svg>Pagar ou<br>transferir</a><a href="#"><svg class="i"><use href="#put"/></svg>Depositar<br>dinheiro</a><a href="#"><svg class="i pu"><use href="#charge"/></svg>Cobrar um<br>valor</a><a href="#"><svg class="i pu"><use href="#loan"/></svg>Emprést<br>Pessoal</a></div>
<div class="panel base"><div class="lead"></div><div class="tx lg"><div class="rail"><svg class="i"><use href="#shop"/></svg></div><div class="info"><p class="sp"><span>Cantina Nero</span><time>17 FEV</time></p><p>R$ 97,00</p></div></div></div>
</article>

<article class="phone">
<header class="bar"><svg><use href="#sig"/></svg><b>9:41 AM</b><span>100%<svg><use href="#bat"/></svg></span></header>
<nav class="nav"><a href="#" class="back" aria-label="Voltar"><svg><use href="#back"/></svg></a><i></i><button class="help" aria-label="Ajuda">?</button></nav>
<div class="body pad">
<h2 class="say m31">Você tem<br><em>R$ 4.000,00</em> disponíveis,<br><em>R$ 1.000,00</em> em reservas</h2>
<p class="sub m12">R$ 2,01 de rendimentos<br>esse mês</p>
<p class="sub m36"><em>R$ 1.800,00</em> de<br>empréstimos à pagar</p>
</div>
<div class="acts"><a href="#"><svg class="i"><use href="#send"/></svg>Pagar ou<br>transferir</a><a href="#"><svg class="i"><use href="#put"/></svg>Depositar<br>dinheiro</a><a href="#"><svg class="i pu"><use href="#charge"/></svg>Cobrar um<br>valor</a><a href="#"><svg class="i pu"><use href="#loan"/></svg>Emprést<br>Pessoal</a></div>
<div class="panel base"><div class="lead"></div><div class="tx lg"><div class="rail"><svg class="i"><use href="#shop"/></svg></div><div class="info"><p class="sp"><span>Cantina Nero</span><time>17 FEV</time></p><p>R$ 97,00</p></div></div></div>
</article>

<article class="phone apart">
<header class="bar"></header>
<nav class="nav"><a href="#" class="back" aria-label="Voltar"><svg><use href="#back"/></svg></a><i></i><svg class="i find"><use href="#search"/></svg></nav>
<div class="body pad">
<p class="lg m23">Saldo disponível</p><h2 class="amt">R$ 4.800,00</h2>
<p class="muted m8">Saldo total rendendo <b>6,25%</b> ao ano,<br>e você já ganhou <b>R$ 2,01</b> nesse mês</p>
<div class="cols m28"><div><svg class="i"><use href="#chart"/></svg><p class="m8">Reservas</p><p class="val">R$ 1.800,72</p></div><div class="lift"><svg class="pair"><use href="#rings"/></svg><p class="m3">Empréstimos</p><p class="val">R$ 2.130,85</p></div></div>
</div>
<div class="acts"><a href="#"><svg class="i"><use href="#send"/></svg>Pagar ou<br>transferir</a><a href="#"><svg class="i"><use href="#put"/></svg>Depositar<br>dinheiro</a><a href="#"><svg class="i"><use href="#put"/></svg>Cobrar um<br>valor</a><a href="#"><svg class="i pu"><use href="#loan"/></svg>Simular<br>emprést</a></div>
<div class="panel base tall"><div class="lead"></div><div class="tx lg"><div class="rail"><svg class="i"><use href="#shop"/></svg></div><div class="info"><p class="sp"><span>Cantina Nero</span><time>17 FEV</time></p><p>R$ 97,00</p></div></div></div>
</article>

<article class="phone">
<header class="bar"></header>
<nav class="nav"><a href="#" class="back" aria-label="Voltar"><svg><use href="#back"/></svg></a><i></i><svg class="i find"><use href="#search"/></svg></nav>
<div class="body pad">
<p class="lg m18">Saldo disponível</p><div class="sp"><h2 class="amt">R$ 4.800,00</h2><svg class="i eye"><use href="#hide"/></svg></div>
<p class="note m7"><b class="red">1 parcela de Material escolar está atrasada.</b><br>Deposite R$ 100,00 na Nuconta.<br>Tentaremos cobrar novamente às 19h.</p>
<a href="#" class="pot m14"><svg class="i"><use href="#pig"/></svg><span><em>Reservas</em><br><b>R$ 1.800,72</b></span><svg class="ch"><use href="#right"/></svg></a>
<a href="#" class="pot m14"><svg class="i"><use href="#loan"/></svg><span><em>Empréstimos</em><br><b class="red">R$ 2.130,85</b></span><svg class="ch"><use href="#right"/></svg></a>
<div class="dots tiny m28"><i></i><i class="on"></i></div>
</div>
<div class="acts"><a href="#"><svg class="i"><use href="#send"/></svg>Pagar ou<br>transferir</a><a href="#"><svg class="i"><use href="#put"/></svg>Depositar<br>dinheiro</a><a href="#"><svg class="i"><use href="#put"/></svg>Cobrar um<br>valor</a><a href="#"><svg class="i pu"><use href="#loan"/></svg>Simular<br>emprést</a></div>
<div class="panel base tall"><div class="lead"></div><div class="tx lg"><div class="rail"><svg class="i"><use href="#shop"/></svg></div><div class="info"><p class="sp"><span>Cantina Nero</span><time>17 FEV</time></p><p>R$ 97,00</p></div></div></div>
</article>

<article class="phone">
<header class="bar"></header>
<nav class="nav"><a href="#" class="back" aria-label="Voltar"><svg><use href="#back"/></svg></a><i></i><svg class="i find"><use href="#search"/></svg></nav>
<div class="body pad">
<p class="m20">Saldo disponíveis</p><div class="sp"><h2 class="amt">R$ 4.800,00</h2><svg class="i eye"><use href="#hide"/></svg></div>
<p class="note m6">Saldo total rendendo <b>6,25%</b> ao ano, e<br>você já ganhou <b>R$ 2,01</b> nesse mês</p>
<a href="#" class="pot m19"><svg class="i"><use href="#pig"/></svg><span><em>Reservas</em><br><b>R$ 1.800,72</b></span><svg class="ch"><use href="#right"/></svg></a>
<a href="#" class="pot m18"><svg class="i"><use href="#loan"/></svg><span><em>Empréstimos</em><br><b>R$ 2.130,85</b></span><svg class="ch"><use href="#right"/></svg></a>
<div class="dots tiny m30"><i></i><i class="on"></i></div>
</div>
<div class="acts"><a href="#"><svg class="i"><use href="#send"/></svg>Pagar ou<br>transferir</a><a href="#"><svg class="i"><use href="#put"/></svg>Depositar<br>dinheiro</a><a href="#"><svg class="i"><use href="#put"/></svg>Cobrar um<br>valor</a><a href="#"><svg class="i pu"><use href="#loan"/></svg>Simular<br>emprést</a></div>
<div class="panel base tall"><div class="lead"></div><div class="tx lg"><div class="rail"><svg class="i"><use href="#shop"/></svg></div><div class="info"><p class="sp"><span>Cantina Nero</span><time>17 FEV</time></p><p>R$ 97,00</p></div></div></div>
</article>

<article class="phone">
<header class="bar"></header>
<nav class="nav"><a href="#" class="back" aria-label="Voltar"><svg><use href="#back"/></svg></a><i></i><svg class="i find"><use href="#search"/></svg></nav>
<div class="body pad">
<p class="lg m28">Saldo disponível</p><h2 class="amt">R$ 4.800,00</h2>
<p class="note m6">Saldo total rendendo 6,25% ao ano, e<br>você já ganhou R$ 2,01 nesse mês</p>
<div class="cols m23"><div><svg class="i"><use href="#pig"/></svg><p class="val m3">R$ 1.800,72</p><p class="muted">Em suas<br>reservas</p></div><div><svg class="i"><use href="#loan"/></svg><p class="val m3">R$ 2.130,85</p><p class="muted">A pagar nos<br>empréstimos</p></div></div>
</div>
<div class="acts"><a href="#"><svg class="i"><use href="#send"/></svg>Pagar ou<br>transferir</a><a href="#"><svg class="i"><use href="#put"/></svg>Depositar<br>dinheiro</a><a href="#"><svg class="i"><use href="#put"/></svg>Cobrar um<br>valor</a><a href="#"><svg class="i pu"><use href="#loan"/></svg>Simular<br>emprést</a></div>
<div class="panel base tall"><div class="lead"></div><div class="tx lg"><div class="rail"><svg class="i"><use href="#shop"/></svg></div><div class="info"><p class="sp"><span>Cantina Nero</span><time>17 FEV</time></p><p>R$ 97,00</p></div></div></div>
</article>
</section>

<!-- 5: resumo e linha do tempo -->
<section class="strip">
<article class="phone fade">
<header class="bar"><svg><use href="#sig"/></svg><b>9:41 AM</b><span>100%<svg><use href="#bat"/></svg></span></header>
<nav class="nav"><a href="#" class="shut" aria-label="Fechar"><svg class="i"><use href="#close"/></svg></a><span class="muted"><b class="lime-t">R$ 2,01</b> nesse mês</span><button class="help" aria-label="Ajuda">?</button></nav>
<div class="body">
<div class="sum m42"><svg class="i"><use href="#cash"/></svg><span><b>SALDO DISPONÍVEL</b>R$ 4.800,00</span></div>
<a href="#" class="sum m22"><svg class="i"><use href="#pig"/></svg><span><b>RESERVAS</b>R$ 1.800,72</span><svg class="ch"><use href="#right"/></svg></a>
<a href="#" class="sum m23"><svg class="i"><use href="#loan"/></svg><span><b>EMPRÉSTIMOS</b>R$ 2.130,85</span><svg class="ch"><use href="#right"/></svg></a>
<div class="tiles m44"><a href="#"><svg class="i"><use href="#send"/></svg>Pagar ou<br>transferir</a><a href="#"><svg class="i"><use href="#put"/></svg>Depositar<br>dinheiro</a><a href="#"><svg class="i pu"><use href="#charge"/></svg>Cobrar um<br>valor</a><a href="#"><svg class="i ghost"><use href="#heart"/></svg>Empréstim<br>o pessoal</a></div>
</div>
<div class="panel base none"><div class="lead"></div><div class="tx lg"><div class="rail"><svg class="i"><use href="#shop"/></svg></div><div class="info"><p class="sp"><span>Cantina Nero</span><time>17 FEV</time></p><p>R$ 97,00</p></div></div></div>
</article>

<article class="phone">
<header class="bar"><svg><use href="#sig"/></svg><b>9:41 AM</b><span>100%<svg><use href="#bat"/></svg></span></header>
<nav class="nav"><a href="#" class="back" aria-label="Voltar"><svg><use href="#back"/></svg></a><span class="muted"><b class="lime-t">R$ 2,01</b> nesse mês</span><button class="help" aria-label="Ajuda">?</button></nav>
<div class="body">
<div class="sum m42"><svg class="i"><use href="#cash"/></svg><span><b>SALDO DISPONÍVEL</b>R$ 4.800,00</span></div>
<a href="#" class="sum m22"><svg class="i"><use href="#pig"/></svg><span><b>RESERVAS</b>R$ 1.800,72</span><svg class="ch"><use href="#right"/></svg></a>
<a href="#" class="sum m23"><svg class="i"><use href="#loan"/></svg><span><b>EMPRÉSTIMOS</b>R$ 2.130,85</span><svg class="ch"><use href="#right"/></svg></a>
<div class="tiles fill m44"><a href="#"><svg class="i"><use href="#send"/></svg>Pagar ou<br>transferir</a><a href="#"><svg class="i"><use href="#put"/></svg>Depositar<br>dinheiro</a><a href="#"><svg class="i pu"><use href="#charge"/></svg>Cobrar um<br>valor</a><a href="#"><svg class="i ghost"><use href="#heart"/></svg>Empréstim<br>o pessoal</a></div>
</div>
<div class="panel base"><div class="lead"></div><div class="tx lg"><div class="rail"><svg class="i"><use href="#shop"/></svg></div><div class="info"><p class="sp"><span>Cantina Nero</span><time>17 FEV</time></p><p>R$ 97,00</p></div></div></div>
</article>

<article class="phone">
<header class="bar"><svg><use href="#sig"/></svg><b>9:41 AM</b><span>100%<svg><use href="#bat"/></svg></span></header>
<nav class="nav"><a href="#" class="back" aria-label="Voltar"><svg><use href="#back"/></svg></a><i></i><button class="help" aria-label="Ajuda">?</button></nav>
<div class="body pad">
<p class="lg m36">Saldo disponível</p><h2 class="amt">R$ 4.800,00</h2>
<div class="cols m17"><div><svg class="i"><use href="#pig"/></svg><p class="m4">Reservas</p><p class="val"><i class="blank"></i><svg class="ch"><use href="#right"/></svg></p></div><div><svg class="i"><use href="#loan"/></svg><p class="m4">Empréstimos</p><p class="val">R$ 2.130,85<svg class="ch"><use href="#right"/></svg></p></div></div>
<p class="note m19">Saldo total rendendo <b>6,25%</b> ao ano, e você<br>já ganhou <b>R$ 2,01</b> nesse mês</p>
</div>
<div class="acts"><a href="#"><svg class="i"><use href="#send"/></svg>Pagar ou<br>transferir</a><a href="#"><svg class="i"><use href="#put"/></svg>Depositar<br>dinheiro</a><a href="#"><svg class="i pu"><use href="#charge"/></svg>Cobrar um<br>valor</a><a href="#"><svg class="i pu"><use href="#loan"/></svg>Emprést<br>Pessoal</a></div>
<div class="panel base tall"><div class="lead"></div><div class="tx lg"><div class="rail"><svg class="i pu"><use href="#loan"/></svg></div><div class="info"><p class="sp"><b>Empréstimo contratado</b><time>17 FEV</time></p><p>Dinheiro da viagem</p></div></div></div>
</article>

<article class="phone apart">
<header class="bar"><svg><use href="#sig"/></svg><b>9:41 AM</b><span>100%<svg><use href="#bat"/></svg></span></header>
<nav class="nav"><a href="#" class="back" aria-label="Voltar"><svg><use href="#back"/></svg></a><i></i><button class="help" aria-label="Ajuda">?</button></nav>
<div class="pad"><h2 class="amt">R$ 4.800,00</h2><p class="muted">Rendeu <b class="gain">R$ 2,01</b> este mes ›</p></div>
<div class="tx brief m30"><div class="rail"><svg class="i"><use href="#shop"/></svg></div><div class="info"><p class="sp"><span>Cartão de débito</span><time>17 FEV</time></p><p class="sp"><span>Fármacia 2 irmãos</span><span>R$ 97,00</span></p></div></div>
<div class="tx brief last"><div class="rail"><svg class="i"><use href="#shop"/></svg></div><div class="info"><p class="sp"><span>Cartão de débito</span><time>17 FEV</time></p><p class="sp"><span>Fármacia 2 irmãos</span><span>R$ 97,00</span></p><a href="#" class="sp more"><span>Outros lançamentos</span><svg class="cv"><use href="#down"/></svg></a></div></div>
<div class="panel grow shelf">
<p>Reservas</p>
<div class="cards line1 m4"><div class="card"><svg class="i pu"><use href="#pig"/></svg>Emergência<br>R$ 1.800,00</div><div class="card"><svg class="i pu"><use href="#pig"/></svg>Eurotrip<br>R$ 1.800,00</div><div class="card"><svg class="i pu"><use href="#pig"/></svg>E<br>R</div></div>
<hr class="m11"><p class="m11">Empréstimo pessoal</p>
<div class="cards line1 m4"><div class="card"><svg class="i pu"><use href="#loan"/></svg></div><div class="card"><svg class="i pu"><use href="#loan"/></svg></div><div class="card"><svg class="i pu"><use href="#loan"/></svg></div></div>
</div>
</article>

<article class="phone">
<header class="bar"><svg><use href="#sig"/></svg><b>9:41 AM</b><span>100%<svg><use href="#bat"/></svg></span></header>
<nav class="nav"><a href="#" class="back" aria-label="Voltar"><svg><use href="#back"/></svg></a><i></i><button class="help" aria-label="Ajuda">?</button></nav>
<div class="pad"><h2 class="amt">R$ 4.800,00</h2><p class="muted">Rendeu <b class="gain">R$ 2,01</b> este mes ›</p></div>
<div class="lead m16"></div>
<div class="tx brief"><div class="rail"><svg class="i"><use href="#cal"/></svg></div><div class="info"><p class="sp"><span>Lançamentos futuros</span></p><p class="sp red"><span>Saldo insuficiente</span><span>– R$ 97,00</span></p></div></div>
<div class="tx brief last"><div class="rail"><svg class="i"><use href="#shop"/></svg></div><div class="info"><p class="sp"><span>Cartão de débito</span><time>17 FEV</time></p><p class="sp"><span>Fármacia 2 irmãos</span><span>R$ 97,00</span></p><a href="#" class="sp more"><span>Outros lançamentos</span><svg class="cv"><use href="#down"/></svg></a></div></div>
<div class="panel grow shelf">
<p>Reservas</p>
<div class="cards line1 m4"><div class="card"><svg class="i pu"><use href="#pig"/></svg>Emergência<br>R$ 1.800,00</div><div class="card"><svg class="i pu"><use href="#pig"/></svg>Eurotrip<br>R$ 1.800,00</div><div class="card"><svg class="i pu"><use href="#pig"/></svg>E<br>R</div></div>
<hr class="m11">
<a href="#" class="row h23"><svg class="i"><use href="#loan"/></svg><span>Empréstimo pessoal</span><svg class="ch"><use href="#right"/></svg></a>
<a href="#" class="row h23"><svg class="i"><use href="#send"/></svg><span>Transferir</span><svg class="ch"><use href="#right"/></svg></a>
</div>
</article>

<article class="phone">
<header class="bar"><svg><use href="#sig"/></svg><b>9:41 AM</b><span>100%<svg><use href="#bat"/></svg></span></header>
<nav class="nav"><a href="#" class="back" aria-label="Voltar"><svg><use href="#back"/></svg></a><i></i><button class="help" aria-label="Ajuda">?</button></nav>
<div class="pad"><h2 class="amt">R$ 4.800,00</h2><p class="muted">Rendeu <b class="gain">R$ 2,01</b> este mes ›</p></div>
<div class="tx brief last m30"><div class="rail"><svg class="i"><use href="#shop"/></svg></div><div class="info"><p class="sp"><span>Cartão de débito</span><time>17 FEV</time></p><p class="sp"><span>Fármacia 2 irmãos</span><span>R$ 97,00</span></p><a href="#" class="sp more"><span>Outros lançamentos</span><svg class="cv"><use href="#down"/></svg></a></div></div>
<div class="panel shelf">
<p>Reservas</p>
<div class="cards line1 m4"><div class="card"><svg class="i pu"><use href="#pig"/></svg>Emergência<br>R$ 1.800,00</div><div class="card"><svg class="i pu"><use href="#pig"/></svg>Eurotrip<br>R$ 1.800,00</div><div class="card"><svg class="i pu"><use href="#pig"/></svg>E<br>R</div></div>
<hr class="m11">
<a href="#" class="row h23"><svg class="i"><use href="#loan"/></svg><span>Empréstimo pessoal</span><svg class="ch"><use href="#right"/></svg></a>
<a href="#" class="row h23"><svg class="i"><use href="#send"/></svg><span>Transferir</span><svg class="ch"><use href="#right"/></svg></a>
<a href="#" class="row h23"><svg class="i"><use href="#put"/></svg><span>Depositar</span><svg class="ch"><use href="#right"/></svg></a>
</div>
</article>
</section>

<!-- 6: blocos separados por linhas -->
<section class="strip inset">
<article class="phone">
<header class="bar"><svg><use href="#sig"/></svg><b>9:41 AM</b><span>100%<svg><use href="#bat"/></svg></span></header>
<nav class="nav"><a href="#" class="back" aria-label="Voltar"><svg><use href="#back"/></svg></a><i></i><button class="help" aria-label="Ajuda">?</button></nav>
<div class="body">
<div class="pad"><p class="lg muted m37">Saldo disponível</p><h2 class="amt m2">R$ 4.800,00</h2><p class="sm muted m2"><b class="lime-t">R$ 2,01</b> nesse mês</p>
<hr class="m14">
<p class="lg muted m12">Reservas</p><p class="lg m2">R$ 0,00</p><p class="sm muted m1"><b class="lime-t">R$ 0,00</b> nesse mês</p></div>
<div class="tiles shade m46"><a href="#"><svg class="i"><use href="#send"/></svg>Pagar ou<br>transferir</a><a href="#"><svg class="i"><use href="#put"/></svg>Depositar<br>dinheiro</a><a href="#"><svg class="i pu"><use href="#charge"/></svg>Cobrar um<br>valor</a><a href="#"><svg class="i ghost"><use href="#heart"/></svg>Empréstim<br>o pessoal</a></div>
</div>
<div class="panel base"><div class="lead"></div><div class="tx lg"><div class="rail"><svg class="i"><use href="#shop"/></svg></div><div class="info"><p class="sp"><span>Cantina Nero</span><time>17 FEV</time></p><p>R$ 97,00</p></div></div></div>
</article>

<article class="phone">
<header class="bar"><svg><use href="#sig"/></svg><b>9:41 AM</b><span>100%<svg><use href="#bat"/></svg></span></header>
<div class="head low">
<nav class="nav"><a href="#" class="back" aria-label="Voltar"><svg><use href="#back"/></svg></a><i></i><button class="help dim" aria-label="Ajuda">?</button></nav>
<div class="pad"><h2 class="amt mix m10">R$ <b>4.800</b>,00</h2><p class="sm m1"><b class="lime-t">R$ 2,01</b> nesse mês</p></div>
</div>
<div class="body">
<div class="pad"><p class="lg muted m20">Reservas</p><p class="lg m3">R$ 1.800,00</p><p class="sm muted m2"><b class="lime-t">R$ 2,01</b> nesse mês</p>
<hr class="m16">
<p class="lg muted m17">Empréstimos à pagar</p><p class="lg m1">R$ 1.800,00</p><p class="sm red m2">1 parcela atrasada.</p></div>
<div class="tiles lined m16"><a href="#"><svg class="i"><use href="#send"/></svg>Pagar ou<br>transferir</a><a href="#"><svg class="i"><use href="#put"/></svg>Depositar<br>dinheiro</a><a href="#"><svg class="i pu"><use href="#charge"/></svg>Cobrar um<br>valor</a><a href="#"><svg class="i ghost"><use href="#heart"/></svg>Empréstim<br>o pessoal</a></div>
</div>
<div class="panel base"><div class="lead"></div><div class="tx lg"><div class="rail"><svg class="i"><use href="#shop"/></svg></div><div class="info"><p class="sp"><span>Cantina Nero</span><time>17 FEV</time></p><p>R$ 97,00</p></div></div></div>
</article>

<article class="phone">
<header class="bar"><svg><use href="#sig"/></svg><b>9:41 AM</b><span>100%<svg><use href="#bat"/></svg></span></header>
<nav class="nav"><a href="#" class="back" aria-label="Voltar"><svg><use href="#back"/></svg></a><i></i><button class="help" aria-label="Ajuda">?</button></nav>
<div class="body">
<div class="pad"><p class="lg muted m22">Saldo disponível</p><h2 class="amt mix">R$ <b>4.800</b>,00</h2><p class="sm muted"><b class="lime-t">R$ 2,01</b> nesse mês</p>
<hr class="m12">
<p class="lg muted m12">Reservas</p><p class="lg m1">R$ 1.800,00</p><p class="sm muted m2"><b class="lime-t">R$ 2,01</b> nesse mês</p>
<hr class="m11">
<p class="lg muted m12">Empréstimos à pagar</p><p class="lg m1">R$ 1.800,00</p><p class="sm red m3">1 parcela atrasada.</p></div>
<div class="tiles lined m11"><a href="#"><svg class="i"><use href="#send"/></svg>Pagar ou<br>transferir</a><a href="#"><svg class="i"><use href="#put"/></svg>Depositar<br>dinheiro</a><a href="#"><svg class="i pu"><use href="#charge"/></svg>Cobrar um<br>valor</a><a href="#"><svg class="i ghost"><use href="#heart"/></svg>Empréstim<br>o pessoal</a></div>
</div>
<div class="panel base"><div class="lead"></div><div class="tx lg"><div class="rail"><svg class="i"><use href="#shop"/></svg></div><div class="info"><p class="sp"><span>Cantina Nero</span><time>17 FEV</time></p><p>R$ 97,00</p></div></div></div>
</article>

<article class="phone">
<header class="bar"><svg><use href="#sig"/></svg><b>9:41 AM</b><span>100%<svg><use href="#bat"/></svg></span></header>
<div class="head short">
<nav class="nav"><a href="#" class="back" aria-label="Voltar"><svg><use href="#back"/></svg></a><i></i><button class="help" aria-label="Ajuda">?</button></nav>
<div class="slides m14"><div><p>Disponível</p><h2 class="mini m2">R$ 4.800,00</h2></div><div class="half"><p>Reservas</p><h2 class="mini m2">R$ 4.</h2></div></div>
</div>
<div class="body">
<div class="list m8">
<a href="#" class="row"><svg class="i"><use href="#chart"/></svg><span>Rendimentos<small>R$ 2,01 nesse mês</small></span><svg class="ch"><use href="#right"/></svg></a>
<a href="#" class="row"><svg class="i"><use href="#pig"/></svg><span>Dinheiro da viagem<small>R$ 2,01 nesse mês</small></span><svg class="ch"><use href="#right"/></svg></a>
<a href="#" class="row"><svg class="i"><use href="#loan"/></svg><span>Empréstimo pessoal</span><svg class="ch"><use href="#right"/></svg></a>
<a href="#" class="row"><svg class="i"><use href="#send"/></svg><span>Transferir</span><svg class="ch"><use href="#right"/></svg></a>
<a href="#" class="row"><svg class="i"><use href="#charge"/></svg><span>Cobrar um valor</span><svg class="ch"><use href="#right"/></svg></a>
</div>
</div>
<a href="#" class="foot far white edge"><svg class="i"><use href="#search"/></svg><span>Extrato de lançamentos</span><svg class="cv"><use href="#up"/></svg></a>
</article>
</section>

</main>
</body>
</html>
```
FILE: styles.css
```css
:root {
  --brand: #82269e;
  --deep: #530082;
  --purple: #8c38c8;
  --icon-purple: #a45fdc;
  --lime: #9fd32c;
  --ink: #1c1c1c;
  --text: #3a3a3a;
  --muted: #8c8c8c;
  --line: #ececec;
  --panel: #f5f5f5;
  --red: #dc1432;
}

* { box-sizing: border-box; }

body {
  margin: 0;
  background: #fff;
  color: var(--text);
  font: 7px/9px Inter, "Liberation Sans", sans-serif;
}

p, h2, hr { margin: 0; }
a { color: inherit; text-decoration: none; }
button { padding: 0; border: 0; background: none; color: inherit; font: inherit; }
em, i { font-style: normal; }
b, h2 { font-weight: 600; }
small { display: block; color: var(--muted); font-size: 6px; line-height: 8px; }
hr { border: 0; border-top: 1px solid #dcdcdc; }
svg { flex: none; fill: none; stroke: currentColor; stroke-width: 1.4; }
.defs { display: none; }
.coin { fill: currentColor; stroke: none; font-size: 11px; text-anchor: middle; }

/* canvas */
.sheet { display: flex; flex-direction: column; gap: 54px; overflow: hidden; }
.strip { display: flex; gap: 22px; height: 314px; }
.strip.first, .strip.inset { height: 313px; }
.strip.inset > :first-child { margin-left: 8px; }
.phone {
  flex: 0 0 calc((100% - 188px) / 8);
  display: flex;
  flex-direction: column;
  min-width: 0;
  overflow: hidden;
  white-space: nowrap;
}
.phone.apart { margin-left: 34px; }
.phone.sys { font-family: Roboto, "Liberation Sans", sans-serif; }
.phone.fade { background: linear-gradient(#fff 57px, #fdfdfd 58px, #f5f5f5 240px); }

/* status bar */
.bar {
  flex: none;
  display: grid;
  grid-template-columns: 1fr auto 1fr;
  align-items: center;
  height: 10px;
  padding: 0 2px 0 3px;
  background: var(--brand);
  color: #fff;
  font: 6px/10px Roboto, "Liberation Sans", sans-serif;
}
.bar b { font-weight: 500; }
.bar > svg { width: 25px; height: 5px; }
.bar span { display: flex; align-items: center; justify-content: flex-end; gap: 1px; }
.bar span svg { width: 12px; height: 5px; }
.bar.clear { position: relative; margin-bottom: -10px; background: none; color: #111; }

/* navigation */
.nav {
  flex: none;
  display: grid;
  grid-template-columns: 1fr auto 1fr;
  align-items: center;
  height: 33px;
  padding: 0 3px;
}
.back svg { display: block; width: 21px; height: 12px; color: #8a8a8a; }
.shut { padding-left: 8px; color: #8a8a8a; }
.help {
  width: 11px;
  height: 11px;
  border: 1px solid #999;
  border-radius: 50%;
  color: #888;
  font-size: 7px;
  line-height: 9px;
  text-align: center;
}
.nav .help, .nav .find { justify-self: end; margin-right: 9px; }
.dots { display: flex; gap: 4px; }
.dots i { width: 4px; height: 4px; border-radius: 50%; background: #c8c8c8; }
.dots i.on { background: #111; }
.dots.tiny { justify-content: center; gap: 3px; padding-right: 6px; }
.dots.tiny i { width: 2px; height: 2px; background: #888; }
.dots.tiny i.on { background: #111; }
.tabs { display: flex; font-size: 5px; font-weight: 600; }
.tabs button { width: 43px; height: 16px; border-radius: 8px; }
.tabs .on { background: #fff; color: var(--purple); }
.tabs .line { border: 1px solid #fff; }

/* coloured headers */
.head { padding-bottom: 22px; background: var(--brand); color: #fff; }
.head.short { padding-bottom: 12px; }
.head.low { padding-bottom: 15px; }
.head.lime { background: var(--lime); }
.night { background: var(--deep); color: #fff; }
.head .back svg, .night .back svg, .side .back svg { color: #fff; }
.head .help, .side .help { border-color: #e6c8f0; color: #e6c8f0; }
.head .help.dim, .night .help.dim { border-color: #8a4f96; color: #8a4f96; }
.head .help.dark { border-color: #6f8f30; color: #6f8f30; }
.new {
  display: block;
  width: 56px;
  height: 15px;
  border-radius: 1px;
  background: #fff;
  color: var(--purple);
  font-size: 5px;
  font-weight: 600;
}

/* containers */
.split { flex: 1; display: flex; min-height: 0; }
.pane { flex: 1; display: flex; flex-direction: column; min-width: 0; overflow: hidden; }
.body { flex: 1; min-height: 0; overflow: hidden; }
.body.over { flex-shrink: 0; overflow: visible; }
.pad { flex: none; padding: 0 11px; }
.body.pad { flex: 1; }
.panel { background: var(--panel); }
.grow { flex: 1; min-height: 0; overflow: hidden; }
.slid { margin-bottom: 1px; margin-left: 10px; box-shadow: -2px 0 2px #f0f0f0; }
.drop { padding-top: 4px; }
.peek {
  flex: 0 0 10px;
  display: flex;
  flex-direction: column;
  gap: 38px;
  margin: 1px 0;
  padding: 15px 0 0 4px;
  overflow: hidden;
  background: var(--panel);
  opacity: .5;
}
.side {
  flex: 0 0 35px;
  display: flex;
  flex-direction: column;
  align-items: center;
  gap: 22px;
  padding-top: 20px;
  background: var(--brand);
  color: #fff;
}
.side .back, .side .gap { height: 12px; margin-bottom: 99px; }
.side .back { margin-right: 9px; }
.side .i { color: #e6c8f0; }

/* type */
.sm { font-size: 6px; line-height: 8px; }
.lg { font-size: 8px; line-height: 10px; }
.muted { color: var(--muted); }
.bold { font-weight: 600; color: var(--ink); }
.red { color: var(--red); }
.amt { color: var(--ink); font-size: 17px; line-height: 20px; }
.mix { font-weight: 300; }
.mix b { font-weight: 600; }
.mix .ch { margin-bottom: 3px; }
.hero { color: var(--ink); font-size: 21px; line-height: 20px; }
.hero.thin { font-weight: 300; }
.hero.fat { font-weight: 900; }
.mid { text-align: center; }
.mini { font-size: 12px; line-height: 14px; }
.head .amt, .head .hero, .night .hero { color: #fff; }
.gain { color: #3ca53c; }
.sys .gain { color: #64b464; }
.sys .night .gain { color: #64c8d2; }
.lime-t { color: var(--lime); }
.note { color: var(--muted); line-height: 10px; }
.say { color: var(--ink); font-size: 12px; line-height: 14px; }
.say.soft { font-size: 13px; font-weight: 300; }
.say em, .sub em { color: #9440d0; }
.sub { color: var(--ink); font-size: 8px; line-height: 11px; font-weight: 600; }

/* icons */
.i { width: 12px; height: 12px; color: #8a8a8a; }
.i.pu { color: var(--icon-purple); }
.i.faint { color: #7a4a90; }
.i.ghost { color: #fff; }
.ch { width: 4px; height: 6px; color: #888; }
.cv { width: 7px; height: 4px; color: #888; }
.eye { margin-top: 4px; }

/* list rows */
.list { margin-right: 11px; margin-left: 11px; }
.list .ch { color: #c4c4c4; }
.row {
  display: flex;
  align-items: center;
  gap: 7px;
  height: 32px;
  padding-right: 2px;
  border-bottom: 1px solid var(--line);
}
.list .row:last-child { border-color: transparent; }
.list .row.ruled { border-color: #e4e4e4; }
.list .bare { border-color: transparent; }
.row span { flex: 1; }
.row .end { flex: none; font-size: 6px; }
.end em { color: var(--muted); }
.panel .row { border-color: #e4e4e4; }
.row.h23 { height: 23px; }
.row.h28 { height: 28px; }
.row.h34 { height: 34px; }
.row.h36 { height: 36px; }
.tight .row { height: 30px; }
.tight small { font-size: 7px; line-height: 9px; }
.tight small:not(.red) { color: #aaa; }
.tight small.red { color: var(--red); }
.list.tight .ch { color: #888; }
.list.wide { margin-right: 8px; margin-left: 8px; }
.wide .row { gap: 11px; padding: 0 0 0 4px; }
.dash { display: block; width: 10px; height: 2px; margin-left: 4px; background: #aaa; }
.goals .row { height: 37px; gap: 8px; padding-left: 2px; }
.goals .row:nth-child(3) { height: 32px; padding-top: 6px; }
.goals .row:nth-child(4) { height: 48px; }
.pt { color: var(--purple); }

.ball {
  flex: none;
  display: block;
  width: 17px;
  height: 17px;
  border-radius: 50%;
  background: var(--purple);
}
.row .ball.green, .row .ball.grey { width: 19px; height: 19px; }
.row .ball + span { margin-left: 1px; }
.ball.green { background: var(--lime); }
.ball.grey { background: var(--panel); font-size: 9px; line-height: 19px; text-align: center; }
.ball.pale { background: #f2e9fa; }
.accts .ball.grey { background: #e0e0e0; }

.bubbles { display: flex; gap: 17px; margin-top: -1px; padding-left: 13px; }
.bubbles .ball { margin-left: 2px; }
.bubbles.big { gap: 0; margin-top: -8px; padding-left: 31px; }
.bubbles.big div { width: 57px; text-align: center; }
.bubbles.big .ball { width: 28px; height: 28px; margin: 0 auto; }
.accts { display: flex; align-items: flex-start; gap: 20px; margin-top: 13px; padding-left: 11px; }
.accts div { display: flex; flex: none; align-items: center; gap: 8px; }
.accts .on { padding-bottom: 11px; border-bottom: 2px solid var(--purple); }
.accts.scrolled { margin-left: -44px; }

.foot {
  flex: none;
  display: flex;
  align-items: center;
  gap: 7px;
  height: 33px;
  margin-bottom: 1px;
  padding: 0 12px 0 11px;
  background: var(--panel);
}
.foot span { flex: 1; }
.foot.far { gap: 12px; padding-left: 12px; }
.foot.white { background: #fff; }
.foot.edge { box-shadow: 0 -2px 3px #eee; }

/* timeline */
.lead { flex: none; width: 1px; height: 10px; margin-left: 17px; margin-bottom: 4px; background: #d8d8d8; }
.tx { flex: none; display: flex; gap: 11px; height: 50px; padding: 0 8px 0 11px; }
.rail { flex: none; display: flex; flex-direction: column; align-items: center; width: 12px; }
.rail::after { content: ""; flex: 1; width: 1px; margin: 4px 0; background: #d8d8d8; }
.info { flex: 1; min-width: 0; margin-top: -3px; line-height: 10px; }
.info b { color: var(--ink); font-size: 6px; line-height: 8px; }
.info time { color: var(--muted); font-size: 6px; line-height: 8px; }
.off .info, .off .info b { color: #7c7c7c; }
.info.two { margin-top: -7px; }
.info.two b { width: 50px; margin-bottom: -4px; white-space: normal; }
.info.two time { margin-top: 4px; }
.tx.lg { font-size: 8px; }
.sp { display: flex; justify-content: space-between; }
.brief { height: 39px; padding-right: 11px; }
.brief .info { line-height: 9px; }
.brief .info p:first-child { color: var(--muted); font-size: 6px; line-height: 8px; }
.brief.last { height: 56px; }
.last .rail::after { margin-bottom: 0; }
.more { align-items: center; margin-top: 23px; padding-right: 1px; }
.night .i:not(.faint), .night .brief .info p:first-child, .night time { color: #eadcf2; }
.night .rail::after { background: #8d5bab; }
.night .red { color: #d0267a; }

/* bottom panel that cuts through a statement line */
.base { flex: none; height: 27px; overflow: hidden; border-top: 1px solid #e2e2e2; }
.base.tall { height: 30px; }
.base.none { border-color: transparent; background: none; }

/* action strip */
.acts { flex: none; display: flex; height: 49px; border-top: 1px solid var(--line); }
.acts.end1 { margin-bottom: 1px; background: #fff; }
.acts a {
  flex: 0 0 49px;
  padding: 7px 0 0 7px;
  border-right: 1px solid var(--line);
  font-size: 6px;
  line-height: 8px;
}
.acts .i, .card .i, .tiles .i { display: block; }
.acts .i { margin-bottom: 7px; }

.tiles { display: flex; gap: 4px; padding-left: 8px; }
.tiles a {
  flex: 0 0 41px;
  height: 45px;
  padding: 4px 3px;
  border: 1px solid transparent;
  border-radius: 1px;
  background: #fff;
  font-size: 6px;
  line-height: 8px;
}
.tiles .i { margin-bottom: 9px; }
.tiles.fill a { background: var(--panel); }
.tiles.lined a { border-color: #ddd; }
.tiles.shade a { box-shadow: 0 0 4px #e4e4e4; }

/* cards */
.trip {
  display: flex;
  align-items: center;
  gap: 7px;
  height: 45px;
  padding-left: 7px;
  border: 1px solid #e6e6e6;
}
.trip b { color: var(--ink); }
.ring { width: 30px; height: 30px; color: #888; }
.cards { display: grid; grid-template-columns: 73px 73px; gap: 8px; }
.card {
  height: 47px;
  padding: 6px 7px;
  border: 1px solid #e6e6e6;
  border-radius: 1px;
  background: #fff;
  font-size: 6px;
  line-height: 8px;
}
.card .i { margin-bottom: 5px; }
.fill .card { border-color: var(--panel); background: var(--panel); }
.cards.line1 { grid-template-columns: repeat(3, 73px); gap: 4px; }
.shelf { margin: 0 1px; padding: 10px 10px 0; border-top: 1px solid #e2e2e2; }

/* balance summaries */
.cols { display: grid; grid-template-columns: 81px 1fr; }
.cols .i, .cols .pair { display: block; }
.lift { margin-top: -3px; }
.pair { width: 26px; height: 17px; color: #888; }
.val { display: flex; align-items: center; gap: 6px; color: var(--ink); font-size: 8px; font-weight: 600; }
.blank { width: 47px; height: 9px; background: var(--panel); }
.pot { display: flex; align-items: center; gap: 8px; }
.pot em { color: var(--muted); }
.pot b { color: var(--ink); font-size: 8px; }
.pot b.red { color: var(--red); }
.sum { display: flex; align-items: center; gap: 11px; padding-left: 11px; font-size: 10px; line-height: 12px; }
.sum b { display: block; font-size: 5px; line-height: 7px; }
.sum .ch { margin: 6px 0 0 -4px; }
.slides { display: flex; gap: 64px; padding-left: 11px; }
.half { opacity: .5; }

/* vertical rhythm */
.m1 { margin-top: 1px; }
.m2 { margin-top: 2px; }
.m3 { margin-top: 3px; }
.m4 { margin-top: 4px; }
.m6 { margin-top: 6px; }
.m7 { margin-top: 7px; }
.m8 { margin-top: 8px; }
.m9 { margin-top: 9px; }
.m10 { margin-top: 10px; }
.m11 { margin-top: 11px; }
.m12 { margin-top: 12px; }
.m14 { margin-top: 14px; }
.m16 { margin-top: 16px; }
.m17 { margin-top: 17px; }
.m18 { margin-top: 18px; }
.m19 { margin-top: 19px; }
.m20 { margin-top: 20px; }
.m22 { margin-top: 22px; }
.m23 { margin-top: 23px; }
.m24 { margin-top: 24px; }
.m26 { margin-top: 26px; }
.m28 { margin-top: 28px; }
.m30 { margin-top: 30px; }
.m31 { margin-top: 31px; }
.m34 { margin-top: 34px; }
.m36 { margin-top: 36px; }
.m37 { margin-top: 37px; }
.m38 { margin-top: 38px; }
.m42 { margin-top: 42px; }
.m44 { margin-top: 44px; }
.m46 { margin-top: 46px; }
```
